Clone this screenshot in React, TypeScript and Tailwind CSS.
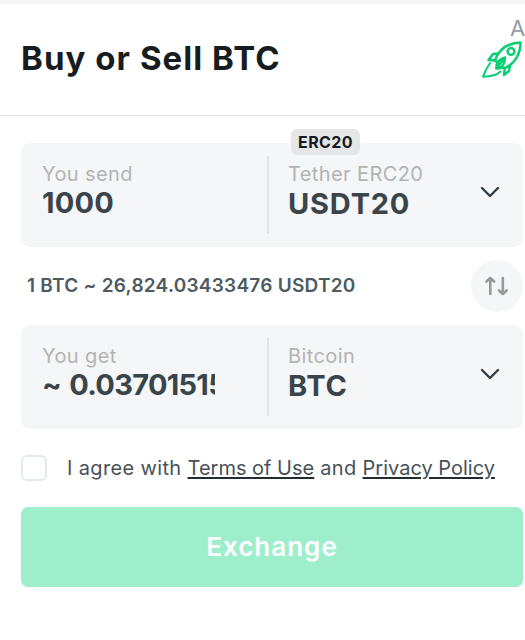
import { useState } from 'react';

export default function App() {
  const [agreed, setAgreed] = useState(false);

  return (
    <div className="h-[640px] w-[525px] overflow-hidden border-t-4 border-[#f5f5f5] bg-white font-['Inter','Liberation_Sans',sans-serif]">
      <header className="flex h-[112px] justify-between border-b border-[#dfe5ea] pl-[21px]">
        <h1 className="pt-[30px] text-[33px] leading-[48px] font-bold tracking-[1.05px] whitespace-nowrap text-[#161c20]">Buy or Sell BTC</h1>
        <div className="flex w-[44px] shrink-0 flex-col pt-[12px]">
          <span className="pl-[29px] text-[22px] leading-6 text-[#939aa8]">A</span>
          <Rocket />
        </div>
      </header>

      <main className="mr-[2px] ml-[21px] pt-[27px]">
        <Field label="You send" value="1000" name="Tether ERC20" ticker="USDT20" tag="ERC20" />
        <div className="flex h-[78px] items-center justify-between pl-[6px]">
          <span className="text-[19px] font-semibold tracking-[0.26px] whitespace-nowrap text-[#4d5a61]">1 BTC ~ 26,824.03433476 USDT20</span>
          <button type="button" className="flex size-[52px] items-center justify-center rounded-full bg-[#f5f6f8]">
            <SwapArrows />
          </button>
        </div>
        <Field label="You get" value="~ 0.03701515" name="Bitcoin" ticker="BTC" tight />

        <div className="mt-[26px] flex h-[26px] items-center">
          <button
            type="button"
            role="checkbox"
            aria-checked={agreed}
            aria-label="I agree"
            onClick={() => setAgreed(!agreed)}
            className={`size-[26px] shrink-0 rounded-[6px] border-2 border-[#e3e8ed] ${agreed ? 'bg-[#9eeecb]' : 'bg-white'}`}
          />
          <p className="ml-[20px] text-[20px] leading-[24px] tracking-[0.36px] whitespace-nowrap text-[#475158]">
            I agree with <Terms>Terms of Use</Terms> and <Terms>Privacy Policy</Terms>
          </p>
        </div>

        <button type="button" className="mt-[26px] h-[80px] w-full rounded-[7px] bg-[#9eeecb] pb-px text-[26px] font-semibold tracking-[1px] text-white">
          Exchange
        </button>
      </main>
    </div>
  );
}

function Terms({ children }: { children: string }) {
  return <a className="tracking-normal underline decoration-[#222b32] decoration-2 underline-offset-[2px]">{children}</a>;
}

function Field({ label, value, name, ticker, tag, tight }: { label: string; value: string; name: string; ticker: string; tag?: string; tight?: boolean }) {
  return (
    <div className="relative flex h-[104px] items-center rounded-[9px] bg-[#f5f6f8]">
      {tag && <span className="absolute -top-[14px] left-[270px] flex h-[26px] w-[69px] items-center justify-center rounded-[6px] bg-[#e6e6e6] text-[16px] font-bold tracking-[0.4px] text-[#161c20]">{tag}</span>}
      <div className="h-full w-[246px] pt-[17px] pl-[21px]">
        <p className="text-[20px] leading-[28px] tracking-[0.4px] text-[#b3b3b3]">{label}</p>
        <p className={`-my-[3px] w-[173px] overflow-hidden text-[29px] leading-[36px] font-bold whitespace-nowrap text-[#3a454b] ${tight ? 'tracking-[-0.7px] [word-spacing:2px]' : 'tracking-[0.2px]'}`}>{value}</p>
      </div>
      <div className="flex h-[78px] flex-1 items-center justify-between border-l-2 border-[#dfe3e7] pr-[23px] pb-[6px] pl-[19px]">
        <div className="-mt-[5px]">
          <p className="text-[20px] leading-[28px] tracking-[0.4px] text-[#b3b3b3]">{name}</p>
          <p className="text-[29px] leading-[32px] font-bold tracking-[0.8px] text-[#3a454b]">{ticker}</p>
        </div>
        <svg width="20" height="12" viewBox="0 0 20 12" fill="none" stroke="#343e44" strokeWidth="2.4" strokeLinecap="round" strokeLinejoin="round">
          <path d="M2 2l8 8 8-8" />
        </svg>
      </div>
    </div>
  );
}

function SwapArrows() {
  return (
    <svg width="24" height="20" viewBox="0 0 24 20" fill="none" stroke="#999" strokeWidth="2.6" strokeLinecap="round" strokeLinejoin="round">
      <path d="M5.300 18V2.500M1.500 5.500l3.800-3.500 3.800 3.500" />
      <path d="M17.800 2v15.500M14 14.500l3.800 3.500 3.800-3.500" />
    </svg>
  );
}

function Rocket() {
  return (
    <svg width="42" height="38" viewBox="0 0 42 38" fill="none" stroke="#0ace74" strokeWidth="2.5" strokeLinejoin="round" strokeLinecap="round" className="mt-px">
      <path d="M14 19.500C18 8 27 2 39.500 1.500 39.500 12 34.500 22 25 26.500L17 27.200M14 19.500l2.500 2" />
      <circle cx="30" cy="10.500" r="3.400" />
      <path d="M17 12.500L12 13 7.500 19l6.500 0.500M29 24L28 30l-5 4 0.800-7" />
      <path d="M24 16.500C20 17.500 15.200 20.500 15.200 27.500 21 27.500 24 23 24 16.500ZM23 17.500L16 27" />
      <path d="M9 22C7 25 4 30 2 35.700 9 35.500 15 35 19.500 30.500" strokeWidth="2" />
    </svg>
  );
}
